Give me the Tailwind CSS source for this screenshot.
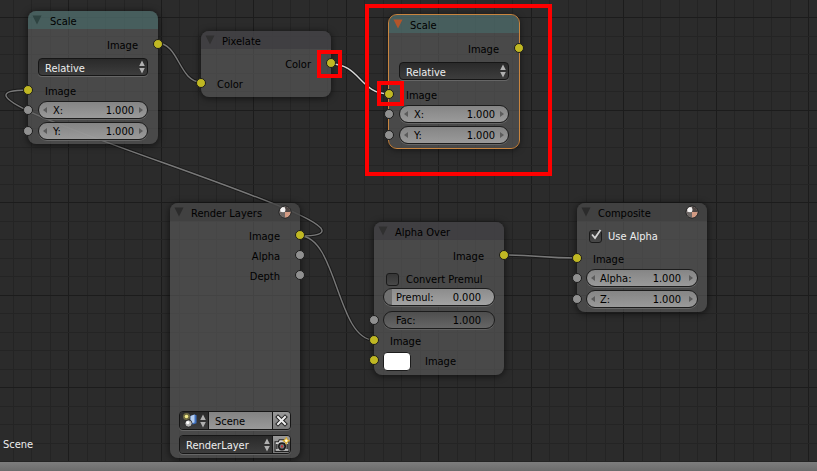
<!DOCTYPE html>
<html lang="en">
<head>
    <meta charset="UTF-8">
    <meta name="viewport" content="width=device-width, initial-scale=1.0">
    <title>Compositing Nodes</title>
    <script src="https://cdn.jsdelivr.net/npm/@tailwindcss/browser@4"></script>
</head>
<body class="flex h-screen flex-col overflow-hidden bg-[#2b2b2b] font-['DejaVu_Sans_Condensed','DejaVu_Sans',sans-serif] text-[11px] leading-4 text-black">
    <svg class="hidden">
        <defs>
            <symbol id="tri" viewBox="0 0 10 10"><path d="M0.5 0.5h9L5 9.5z" fill="currentColor"/></symbol>
            <symbol id="updown" viewBox="0 0 6 14"><path d="M3 0.5L5.8 6H0.2zM3 13.5L5.8 8H0.2z" fill="#b0b0b0"/></symbol>
            <symbol id="left" viewBox="0 0 4 6"><path d="M4 0v6L0 3z" fill="#5c5c5c"/></symbol>
            <symbol id="right" viewBox="0 0 4 6"><path d="M0 0v6l4-3z" fill="#5c5c5c"/></symbol>
            <symbol id="ball" viewBox="0 0 14 14">
                <circle cx="7" cy="7" r="6" fill="#b8b0ad" stroke="#1a1a1a"/>
                <path d="M7 7V1.5A5.5 5.5 0 0 1 12.5 7z" fill="#4d4543"/>
                <path d="M7 7H1.500A5.500 5.500 0 0 0 7 12.500z" fill="#6d6765"/>
                <path d="M7 7h5.500A5.500 5.500 0 0 1 7 12.500z" fill="#d29a83"/>
                <circle cx="5" cy="4.800" r="2.500" fill="#fff" opacity="0.85"/>
            </symbol>
        </defs>
    </svg>

    <main class="relative flex-1 overflow-hidden">
        <svg id="grid" class="absolute inset-0 size-full" shape-rendering="crispEdges"></svg>

        <!-- Links -->
        <svg class="absolute inset-0 size-full" fill="none">
            <g stroke="#1a1a1a" stroke-width="3.4">
                <path d="M157 43C179 43 179 82 201 82"/>
                <path d="M300 236C436 236 -108 90 28 90"/>
                <path d="M300 236C337 236 337 340 374 340"/>
                <path d="M503 255C540 255 540 258 577 258"/>
                <path d="M331 64C360 64 360 94 389 94"/>
            </g>
            <g stroke="#787878" stroke-width="1.4">
                <path d="M157 43C179 43 179 82 201 82"/>
                <path d="M300 236C436 236 -108 90 28 90"/>
                <path d="M300 236C337 236 337 340 374 340"/>
                <path d="M503 255C540 255 540 258 577 258"/>
                <path d="M331 64C360 64 360 94 389 94" stroke="#d8d8d8"/>
            </g>
        </svg>

        <!-- Scale -->
        <section class="absolute left-[28px] top-[11px] w-[130px] rounded-lg bg-[#5e5e5e]/60 pb-1 shadow-[0_1px_6px_1px_rgba(0,0,0,0.5)]">
            <h2 class="flex h-[18px] items-center gap-2 rounded-t-lg bg-[#46706d]/55 px-1"><svg class="size-[10px] text-[#2e4341]"><use href="#tri"/></svg><span class="pt-1">Scale</span></h2>
            <div class="relative mt-1.5 flex h-5 items-center justify-end pr-5 pt-[2px]">Image<i class="absolute -right-[5px] top-1 size-[10px] rounded-full border border-[#1c1c1c] bg-[#c0b823]"></i></div>
            <div class="relative mx-2.5 mt-[3px] h-[18px]">
                <select aria-label="Space" class="block size-full appearance-none rounded-sm border border-[#161616] bg-linear-to-b from-[#2a2a2a] to-[#3d3d3d] px-1.5 pt-[2px] text-[#eee] shadow-[0_1px_0_#666]"><option>Relative</option></select>
                <svg class="absolute right-[3px] top-[2px] h-[14px] w-[6px]"><use href="#updown"/></svg>
            </div>
            <div class="relative mt-[5px] flex h-5 items-center pl-[17px] pt-[2px]">Image<i class="absolute -left-[5px] top-1 size-[10px] rounded-full border border-[#1c1c1c] bg-[#c0b823]"></i></div>
            <div class="relative px-2.5">
                <i class="absolute -left-[5px] top-1 size-[10px] rounded-full border border-[#1c1c1c] bg-[#909090]"></i>
                <label class="flex h-[18px] items-center rounded-full border border-[#1c1c1c] bg-linear-to-b from-[#8c8c8c]/90 to-[#a3a3a3]/90 px-1 shadow-[0_1px_0_#666]"><svg class="mr-1.5 h-[6px] w-[4px]"><use href="#left"/></svg><span class="pt-[2px]">X:</span><input class="w-0 flex-1 pr-[5px] pt-[2px] text-right" value="1.000"><svg class="h-[6px] w-[4px]"><use href="#right"/></svg></label>
            </div>
            <div class="relative mt-[3px] px-2.5">
                <i class="absolute -left-[5px] top-1 size-[10px] rounded-full border border-[#1c1c1c] bg-[#909090]"></i>
                <label class="flex h-[18px] items-center rounded-full border border-[#1c1c1c] bg-linear-to-b from-[#8c8c8c]/90 to-[#a3a3a3]/90 px-1 shadow-[0_1px_0_#666]"><svg class="mr-1.5 h-[6px] w-[4px]"><use href="#left"/></svg><span class="pt-[2px]">Y:</span><input class="w-0 flex-1 pr-[5px] pt-[2px] text-right" value="1.000"><svg class="h-[6px] w-[4px]"><use href="#right"/></svg></label>
            </div>
        </section>

        <!-- Pixelate -->
        <section class="absolute left-[201px] top-[31px] w-[130px] rounded-lg bg-[#5e5e5e]/60 pb-[3px] shadow-[0_1px_6px_1px_rgba(0,0,0,0.5)]">
            <h2 class="flex h-[18px] items-center gap-[7px] rounded-t-lg bg-[#3b383e]/60 px-1"><svg class="size-[10px] text-[#303030]"><use href="#tri"/></svg><span class="pt-1">Pixelate</span></h2>
            <div class="relative mt-[5px] flex h-5 items-center justify-end pr-5 pt-[2px]">Color<i class="absolute -right-[5px] top-1 size-[10px] rounded-full border border-[#1c1c1c] bg-[#c0b823]"></i></div>
            <div class="relative flex h-5 items-center pl-4 pt-[2px]">Color<i class="absolute -left-[5px] top-1 size-[10px] rounded-full border border-[#1c1c1c] bg-[#c0b823]"></i></div>
        </section>

        <!-- Scale, active -->
        <section class="absolute left-[389px] top-[15px] w-[130px] rounded-lg bg-[#5e5e5e]/60 pb-1 shadow-[0_1px_6px_1px_rgba(0,0,0,0.5)] outline outline-[#c9853f]">
            <h2 class="flex h-[18px] items-center gap-[7px] rounded-t-lg bg-[#46706d]/55 px-1"><svg class="size-[10px] text-[#b3552a]"><use href="#tri"/></svg><span class="pt-1">Scale</span></h2>
            <div class="relative mt-1.5 flex h-5 items-center justify-end pr-5 pt-[2px]">Image<i class="absolute -right-[5px] top-1 size-[10px] rounded-full border border-[#1c1c1c] bg-[#c0b823]"></i></div>
            <div class="relative mx-2.5 mt-[3px] h-[18px]">
                <select aria-label="Space" class="block size-full appearance-none rounded-sm border border-[#161616] bg-linear-to-b from-[#2a2a2a] to-[#3d3d3d] px-1.5 pt-[2px] text-[#eee] shadow-[0_1px_0_#666]"><option>Relative</option></select>
                <svg class="absolute right-[3px] top-[2px] h-[14px] w-[6px]"><use href="#updown"/></svg>
            </div>
            <div class="relative mt-[5px] flex h-5 items-center pl-[17px] pt-[2px]">Image<i class="absolute -left-[5px] top-1 size-[10px] rounded-full border border-[#1c1c1c] bg-[#c0b823]"></i></div>
            <div class="relative px-2.5">
                <i class="absolute -left-[5px] top-1 size-[10px] rounded-full border border-[#1c1c1c] bg-[#909090]"></i>
                <label class="flex h-[18px] items-center rounded-full border border-[#1c1c1c] bg-linear-to-b from-[#8c8c8c]/90 to-[#a3a3a3]/90 px-1 shadow-[0_1px_0_#666]"><svg class="mr-1.5 h-[6px] w-[4px]"><use href="#left"/></svg><span class="pt-[2px]">X:</span><input class="w-0 flex-1 pr-[5px] pt-[2px] text-right" value="1.000"><svg class="h-[6px] w-[4px]"><use href="#right"/></svg></label>
            </div>
            <div class="relative mt-[3px] px-2.5">
                <i class="absolute -left-[5px] top-1 size-[10px] rounded-full border border-[#1c1c1c] bg-[#909090]"></i>
                <label class="flex h-[18px] items-center rounded-full border border-[#1c1c1c] bg-linear-to-b from-[#8c8c8c]/90 to-[#a3a3a3]/90 px-1 shadow-[0_1px_0_#666]"><svg class="mr-1.5 h-[6px] w-[4px]"><use href="#left"/></svg><span class="pt-[2px]">Y:</span><input class="w-0 flex-1 pr-[5px] pt-[2px] text-right" value="1.000"><svg class="h-[6px] w-[4px]"><use href="#right"/></svg></label>
            </div>
        </section>

        <!-- Render Layers -->
        <section class="absolute left-[170px] top-[203px] w-[130px] rounded-lg bg-[#5e5e5e]/60 pb-1 shadow-[0_1px_6px_1px_rgba(0,0,0,0.5)]">
            <h2 class="flex h-[18px] items-center rounded-t-lg bg-[#3c3c3c]/60 pl-1 pr-2"><svg class="mr-[7px] size-[10px] text-[#2b2b2b]"><use href="#tri"/></svg><span class="flex-1 whitespace-nowrap pt-1">Render Layers</span><svg class="size-[14px]"><use href="#ball"/></svg></h2>
            <div class="relative mt-[5px] flex h-5 items-center justify-end pr-5 pt-[2px]">Image<i class="absolute -right-[5px] top-1 size-[10px] rounded-full border border-[#1c1c1c] bg-[#c0b823]"></i></div>
            <div class="relative flex h-5 items-center justify-end pr-5 pt-[2px]">Alpha<i class="absolute -right-[5px] top-1 size-[10px] rounded-full border border-[#1c1c1c] bg-[#909090]"></i></div>
            <div class="relative flex h-5 items-center justify-end pr-5 pt-[2px]">Depth<i class="absolute -right-[5px] top-1 size-[10px] rounded-full border border-[#1c1c1c] bg-[#909090]"></i></div>
            <div class="h-[125px]"></div>
            <div class="mx-[9px] flex h-[19px] overflow-hidden rounded-sm border border-[#161616] shadow-[0_1px_0_#666]">
                <button aria-label="Browse scene" class="flex w-[29px] items-center justify-between border-r border-[#161616] bg-linear-to-b from-[#2a2a2a] to-[#3d3d3d] pl-[3px] pr-[2px]">
                    <svg class="size-[15px]" viewBox="0 0 15 15">
                        <path d="M7.5 3l4-1.5 2 .8v8l-4 1.2-2-1z" fill="#3c6fc0"/><path d="M7.500 3l4-1.500v8l-4 1.200z" fill="#b7cff0"/>
                        <circle cx="3.500" cy="3.500" r="3.500" fill="#e8dc6a" opacity="0.350"/><circle cx="3.500" cy="3.500" r="1.800" fill="#f3ea8a"/>
                        <circle cx="5.500" cy="10.500" r="3.600" fill="#b8b8b8" stroke="#222" stroke-width="0.8"/><circle cx="4.800" cy="9.600" r="1.600" fill="#fff"/>
                    </svg>
                    <svg class="h-[14px] w-[6px]"><use href="#updown"/></svg>
                </button>
                <input aria-label="Scene name" class="w-0 flex-1 border-r border-[#161616] bg-linear-to-b from-[#838383] to-[#999] pl-1.5 pt-[2px]" value="Scene">
                <button aria-label="Unlink scene" class="flex w-[17px] items-center justify-center bg-linear-to-b from-[#999] to-[#7c7c7c]">
                    <svg class="size-[13px]" viewBox="0 0 13 13"><path d="M3 3l7 7M10 3l-7 7" stroke="#222" stroke-width="4" stroke-linecap="square"/><path d="M3 3l7 7M10 3l-7 7" stroke="#eee" stroke-width="2" stroke-linecap="square"/></svg>
                </button>
            </div>
            <div class="mx-[9px] mt-[5px] flex h-[19px] overflow-hidden rounded-sm border border-[#161616] shadow-[0_1px_0_#666]">
                <div class="relative flex-1 border-r border-[#161616]">
                    <select aria-label="Layer" class="block size-full appearance-none bg-linear-to-b from-[#2a2a2a] to-[#3d3d3d] px-1.5 pt-[2px] text-[#eee]"><option>RenderLayer</option></select>
                    <svg class="absolute right-[2px] top-[2px] h-[14px] w-[6px]"><use href="#updown"/></svg>
                </div>
                <button aria-label="Render layer" class="flex w-[17px] items-center justify-center bg-linear-to-b from-[#999] to-[#7c7c7c]">
                    <svg class="size-[16px]" viewBox="0 0 15 15">
                        <path d="M1 4.500h3l1-2h4l1 2h4v9H1z" fill="#d8d8d8" stroke="#222"/><path d="M1.500 6.500h2v5h-2zM11.500 6.500h2v5h-2z" fill="#444"/>
                        <circle cx="7.500" cy="8.800" r="3.800" fill="#1c1c1c"/><circle cx="7.500" cy="8.800" r="2.200" fill="#777"/><circle cx="7.500" cy="8.800" r="1" fill="#c33"/>
                        <path d="M11.500 0l1.100 2.400L15 3.500l-2.400 1.100L11.500 7l-1.100-2.400L8 3.500l2.400-1.100z" fill="#f5c83a" stroke="#c8961e" stroke-width="0.500"/><circle cx="11.500" cy="3.500" r="1.200" fill="#fffbe0"/>
                    </svg>
                </button>
            </div>
        </section>

        <!-- Alpha Over -->
        <section class="absolute left-[374px] top-[222px] w-[130px] rounded-lg bg-[#5e5e5e]/60 pb-1 shadow-[0_1px_6px_1px_rgba(0,0,0,0.5)]">
            <h2 class="flex h-[18px] items-center gap-[7px] rounded-t-lg bg-[#3b383e]/60 px-1"><svg class="size-[10px] text-[#303030]"><use href="#tri"/></svg><span class="pt-1">Alpha Over</span></h2>
            <div class="relative mt-1.5 flex h-5 items-center justify-end pr-5 pt-[2px]">Image<i class="absolute -right-[5px] top-1 size-[10px] rounded-full border border-[#1c1c1c] bg-[#c0b823]"></i></div>
            <label class="mt-1 flex h-[18px] items-center gap-[7px] pl-3"><input type="checkbox" class="size-[13px] appearance-none rounded-[3px] border border-[#1a1a1a] bg-linear-to-b from-[#363636] to-[#484848]"><span class="pt-[2px]">Convert Premul</span></label>
            <div class="px-[9px]">
                <label class="flex h-[18px] items-center rounded-full border border-[#1c1c1c] bg-[linear-gradient(to_right,#707070_8px,transparent_8px),linear-gradient(#8c8c8c,#a3a3a3)] pl-3 pr-[13px] shadow-[0_1px_0_#666]"><span class="pt-[2px]">Premul:</span><input class="w-0 flex-1 pt-[2px] text-right" value="0.000"></label>
            </div>
            <div class="relative mt-[5px] px-[9px]">
                <i class="absolute -left-[5px] top-1 size-[10px] rounded-full border border-[#1c1c1c] bg-[#909090]"></i>
                <label class="flex h-[18px] items-center rounded-full border border-[#1c1c1c] bg-linear-to-b from-[#4e4e4e] to-[#666] pl-3 pr-[13px] shadow-[0_1px_0_#606060]"><span class="pt-[2px]">Fac:</span><input class="w-0 flex-1 pt-[2px] text-right" value="1.000"></label>
            </div>
            <div class="relative mt-[2px] flex h-5 items-center pl-4 pt-[2px]">Image<i class="absolute -left-[5px] top-1 size-[10px] rounded-full border border-[#1c1c1c] bg-[#c0b823]"></i></div>
            <div class="relative flex h-5 items-center gap-[14px] pl-[9px]"><button aria-label="Image colour" class="h-[19px] w-[28px] rounded-[4px] border border-[#1c1c1c] bg-white"></button><span class="pt-[2px]">Image</span><i class="absolute -left-[5px] top-1 size-[10px] rounded-full border border-[#1c1c1c] bg-[#c0b823]"></i></div>
        </section>

        <!-- Composite -->
        <section class="absolute left-[577px] top-[203px] w-[130px] rounded-lg bg-[#5e5e5e]/60 pb-1 shadow-[0_1px_6px_1px_rgba(0,0,0,0.5)]">
            <h2 class="flex h-[18px] items-center rounded-t-lg bg-[#3c3c3c]/60 pl-1 pr-2"><svg class="mr-[7px] size-[10px] text-[#2b2b2b]"><use href="#tri"/></svg><span class="flex-1 pt-1">Composite</span><svg class="size-[14px]"><use href="#ball"/></svg></h2>
            <label class="relative mt-[5px] flex h-5 items-center gap-1.5 pl-3 text-[#eee]"><input type="checkbox" checked class="size-[13px] appearance-none rounded-[3px] border border-[#1a1a1a] bg-linear-to-b from-[#363636] to-[#484848]"><span class="pt-[2px]">Use Alpha</span>
                <svg class="absolute left-[13px] top-[3px] size-[12px]" viewBox="0 0 12 12"><path d="M2 5.500l3 3.500L10.500 1" fill="none" stroke="#d5d5d5" stroke-width="1.800"/></svg>
            </label>
            <div class="relative mt-[3px] flex h-5 items-center pl-4 pt-[2px]">Image<i class="absolute -left-[5px] top-1 size-[10px] rounded-full border border-[#1c1c1c] bg-[#c0b823]"></i></div>
            <div class="relative px-[9px]">
                <i class="absolute -left-[5px] top-1 size-[10px] rounded-full border border-[#1c1c1c] bg-[#909090]"></i>
                <label class="flex h-[18px] items-center rounded-full border border-[#1c1c1c] bg-linear-to-b from-[#8c8c8c]/90 to-[#a3a3a3]/90 px-1 shadow-[0_1px_0_#666]"><svg class="mr-[5px] h-[6px] w-[4px]"><use href="#left"/></svg><span class="pt-[2px]">Alpha:</span><input class="w-0 flex-1 pr-[8px] pt-[2px] text-right" value="1.000"><svg class="h-[6px] w-[4px]"><use href="#right"/></svg></label>
            </div>
            <div class="relative mt-[3px] px-[9px]">
                <i class="absolute -left-[5px] top-1 size-[10px] rounded-full border border-[#1c1c1c] bg-[#909090]"></i>
                <label class="flex h-[18px] items-center rounded-full border border-[#1c1c1c] bg-linear-to-b from-[#8c8c8c]/90 to-[#a3a3a3]/90 px-1 shadow-[0_1px_0_#666]"><svg class="mr-[5px] h-[6px] w-[4px]"><use href="#left"/></svg><span class="pt-[2px]">Z:</span><input class="w-0 flex-1 pr-[8px] pt-[2px] text-right" value="1.000"><svg class="h-[6px] w-[4px]"><use href="#right"/></svg></label>
            </div>
        </section>

        <!-- Annotations -->
        <div class="absolute left-[365px] top-[4px] h-[172px] w-[187px] border-4 border-[#f00]"></div>
        <div class="absolute left-[317px] top-[50px] h-[28px] w-[25px] border-4 border-[#f00]"></div>
        <div class="absolute left-[377px] top-[81px] h-[25px] w-[27px] border-4 border-[#f00]"></div>

        <p class="absolute bottom-[9px] left-[3px] text-[#eee]">Scene</p>
    </main>
    <footer class="h-[9px] bg-linear-to-b from-[#7d7d7d] to-[#6c6c6c]"></footer>

    <script>
        // Background grid: every fifth line is darker
        const grid = document.getElementById('grid');
        const step = 18.5;
        let lines = '';
        for (let i = -3; i * step + 68 < window.innerWidth; i++) {
            const x = Math.round(68 + i * step);
            lines += `<rect x="${x}" y="0" width="1" height="100%" fill="${i % 5 === 0 ? '#1c1c1c' : '#242424'}"/>`;
        }
        for (let i = 0; i * step + 17 < window.innerHeight; i++) {
            const y = Math.round(17 + i * step);
            lines += `<rect x="0" y="${y}" width="100%" height="1" fill="${i % 5 === 0 ? '#1c1c1c' : '#242424'}"/>`;
        }
        grid.innerHTML = lines;
    </script>
</body>
</html>
